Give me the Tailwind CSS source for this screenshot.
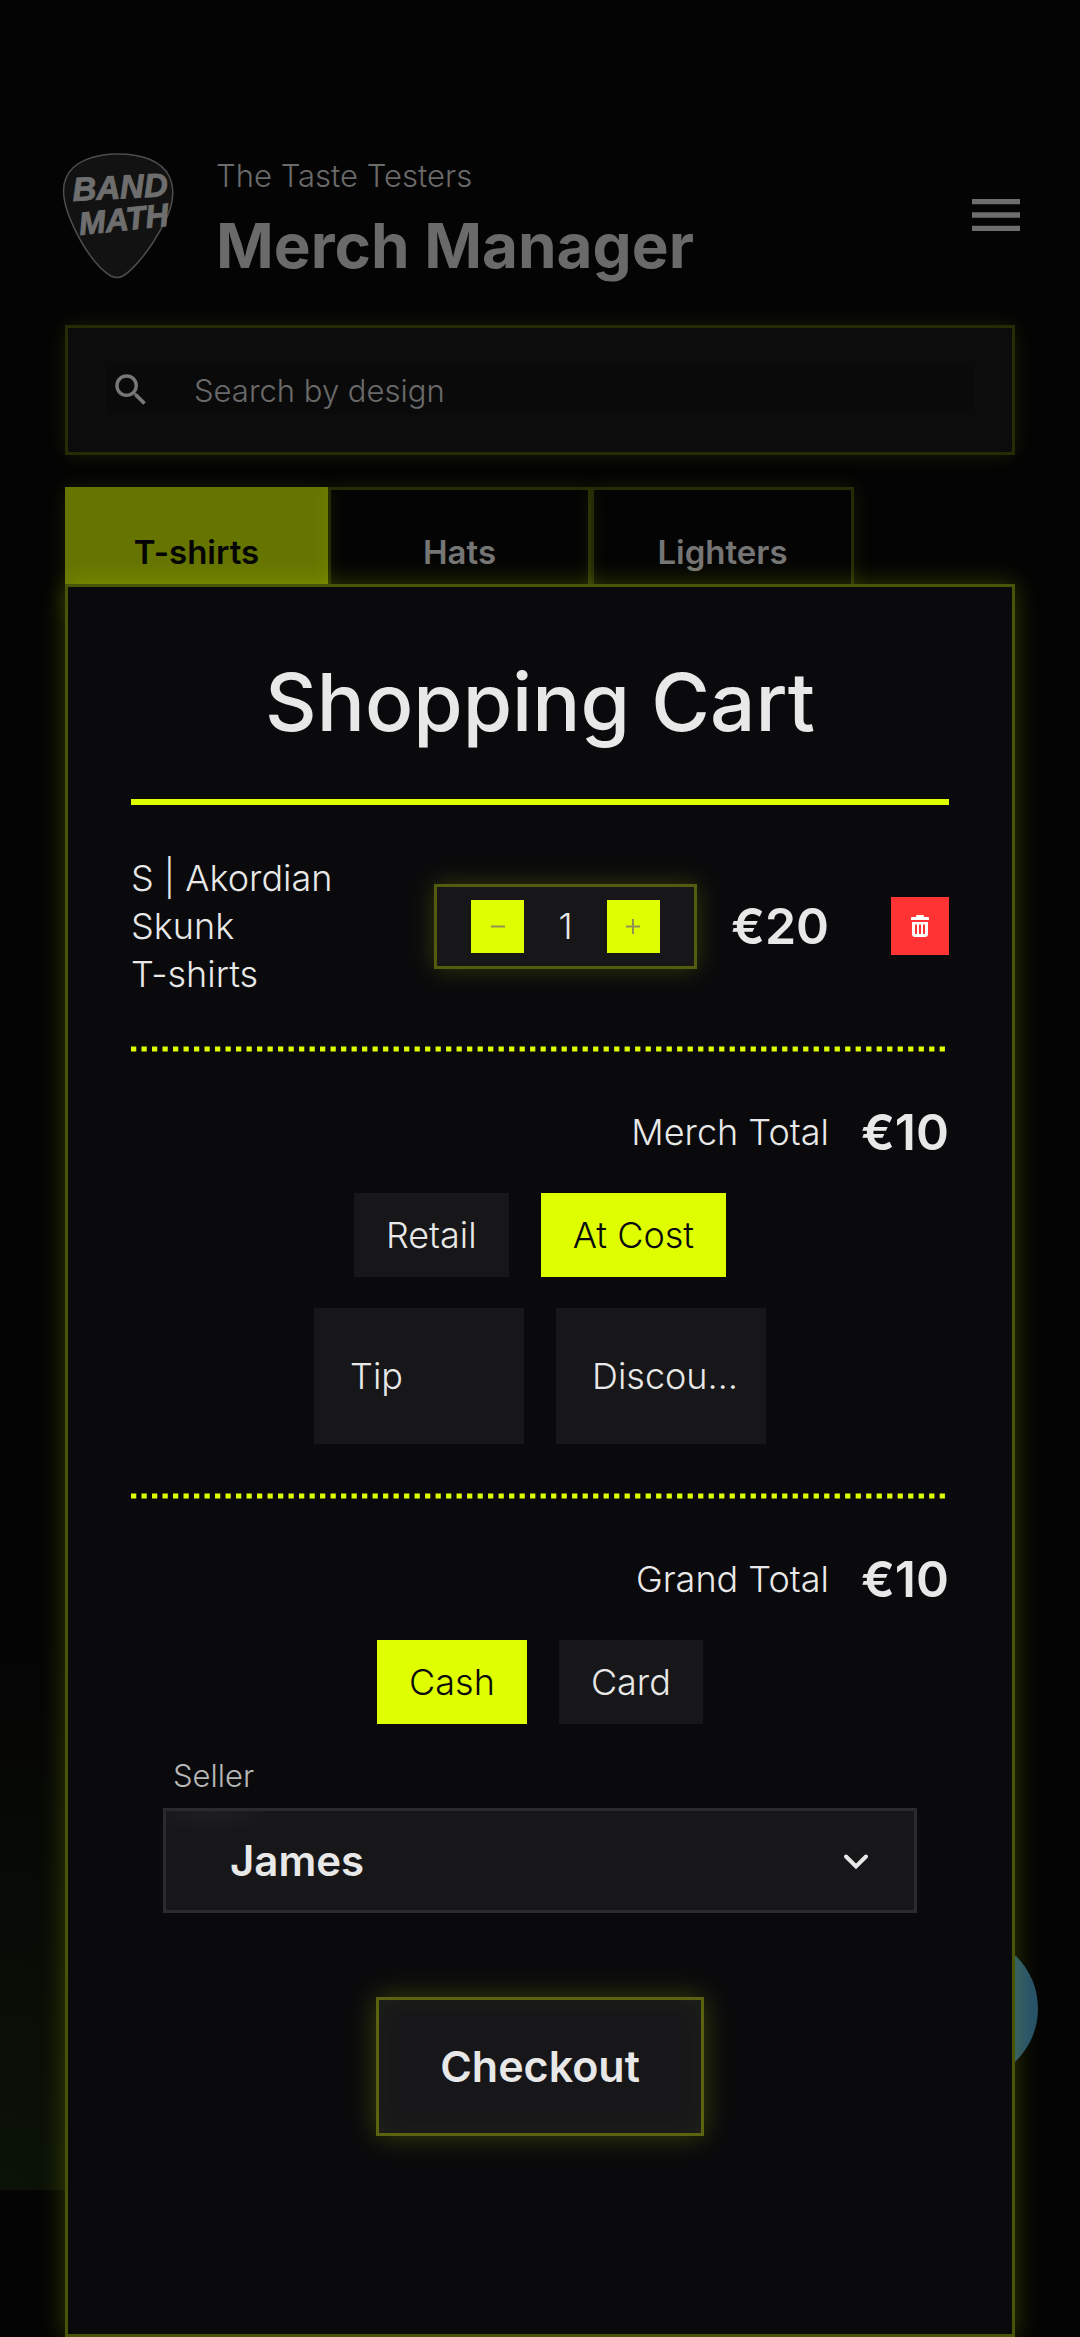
<!DOCTYPE html>
<html lang="en">
<head>
<meta charset="utf-8">
<meta name="viewport" content="width=device-width, initial-scale=1">
<title>Merch Manager</title>
<script src="https://cdn.jsdelivr.net/npm/@tailwindcss/browser@4"></script>
</head>
<body class="bg-[#040404] font-['Inter',sans-serif] font-light text-[#e8e8e8]">
<div class="grid min-h-screen grid-cols-1 grid-rows-1 overflow-hidden">

  <!-- Page behind the cart -->
  <div class="col-start-1 row-start-1 mb-[147px] bg-[radial-gradient(ellipse_700px_560px_at_0%_100%,#0b1207,#040404)] pt-[134px]">
    <header class="flex items-center pr-[52px] pl-[62px]">
      <svg class="h-[128px] w-[112px] shrink-0" viewBox="0 0 112 128" role="img" aria-label="Band Math">
        <path d="M56 3C82 3 100 11 107 25C117 46 106 68 90 93C80 108 68 121 61 125C57 127 53 127 49 125C40 120 29 107 20 92C8 71-4 45 4 27C11 10 33 3 56 3Z" fill="#121212" stroke="#4d4d4d" stroke-width="1.5"/>
        <g fill="#6e6e6e" stroke="#6e6e6e" stroke-width="1" font-family="Liberation Sans, sans-serif" font-weight="700" font-style="italic">
          <text x="11" y="50" font-size="33" transform="rotate(-3 11 50)">BAND</text>
          <text x="18" y="84" font-size="32" transform="rotate(-6 18 84)">MATH</text>
        </g>
      </svg>
      <div class="ml-[42px] flex-1 pt-[16px] pb-[6px] text-[#6a6a6a]">
        <p class="text-[31px] leading-[52px]">The Taste Testers</p>
        <h1 class="text-[62px] leading-[88px] font-bold">Merch Manager</h1>
      </div>
      <button type="button" aria-label="Menu" class="text-[#6e6e6e]">
        <svg class="size-[64px]" viewBox="0 0 24 24" fill="currentColor"><path d="M3 18h18v-2H3v2zm0-5h18v-2H3v2zm0-7v2h18V6H3z"/></svg>
      </button>
    </header>

    <main class="px-[65px]">
      <div class="mt-[29px] border-3 border-[#262b06] bg-[#0c0c0c] p-[38px] shadow-[0_0_20px_#dfff0018]">
        <label class="flex items-center bg-[#0a0a0a]">
          <svg class="mx-[4px] size-[42px] text-[#777]" viewBox="0 0 24 24" fill="currentColor" aria-hidden="true"><path d="M15.5 14h-.79l-.28-.27A6.47 6.47 0 0 0 16 9.5 6.5 6.5 0 1 0 9.500 16c1.610 0 3.090-.59 4.230-1.570l.27.28v.79l5 4.990L20.490 19l-4.990-5zm-6 0C7.010 14 5 11.990 5 9.500S7.010 5 9.500 5 14 7.010 14 9.500 11.990 14 9.500 14z"/></svg>
          <input type="search" aria-label="Search by design" placeholder="Search by design" class="ml-[38px] h-[48px] flex-1 bg-transparent text-[31px] outline-none placeholder:text-[#6a6a6a]">
        </label>
      </div>
      <nav class="mt-[32px] flex text-[33px] font-semibold text-[#757575]">
        <button type="button" class="h-[131px] w-[263px] bg-[#667500] text-[#040404] shadow-[0_0_20px_#dfff0018]">T-shirts</button>
        <button type="button" class="h-[131px] w-[263px] border-3 border-[#262b06] shadow-[0_0_20px_#dfff0018]">Hats</button>
        <button type="button" class="h-[131px] w-[263px] border-3 border-[#262b06] shadow-[0_0_20px_#dfff0018]">Lighters</button>
      </nav>
    </main>
  </div>

  <!-- Cart overlay -->
  <div class="relative col-start-1 row-start-1 flex flex-col px-[65px] pt-[584px]">
    <div class="absolute right-[42px] bottom-[255px] size-[147px] rounded-full bg-[#265169]"></div>
    <section role="dialog" aria-labelledby="cart-title" class="relative flex-1 border-3 border-[#4a5406] bg-[#0a0a0c] px-[63px] pt-[67px] pb-[160px] shadow-[0_0_24px_#dfff0038]">
      <h2 id="cart-title" class="text-center text-[80px] leading-[96px] font-medium">Shopping Cart</h2>
      <hr class="mt-[49px] border-0 border-t-6 border-[#dfff00]">

      <div class="mt-[49px] flex items-center text-[36px] leading-[48px]">
        <p class="w-[303px]">S | Akordian<br>Skunk<br>T-shirts</p>
        <div class="flex h-[85px] w-[263px] shrink-0 items-center justify-between border-3 border-[#525c0c] bg-[#171719] px-[34px] shadow-[0_0_24px_#dfff0030]">
          <button type="button" aria-label="Decrease quantity" class="grid size-[53px] place-items-center bg-[#dfff00] text-[#8f9455]">
            <svg class="size-[16px]" viewBox="0 0 16 16" stroke="currentColor" stroke-width="2" aria-hidden="true"><path d="M1 8.500h14"/></svg>
          </button>
          <span>1</span>
          <button type="button" aria-label="Increase quantity" class="grid size-[53px] place-items-center bg-[#dfff00] text-[#8f9455]">
            <svg class="size-[16px]" viewBox="0 0 16 16" stroke="currentColor" stroke-width="2" aria-hidden="true"><path d="M1 8.500h14M8 1v15"/></svg>
          </button>
        </div>
        <span class="ml-[34px] flex-1 text-[50px] font-semibold">€20</span>
        <button type="button" aria-label="Remove item" class="grid size-[58px] place-items-center bg-[#ff3333] text-white">
          <svg class="size-[28px]" viewBox="0 0 28 28" aria-hidden="true">
            <path fill="currentColor" d="M11 3h6q1 0 1 2h4q1 0 1 1v2H5V6q0-1 1-1h4q0-2 1-2zM6 10h16v12q0 3-3 3H9q-3 0-3-3z"/>
            <path stroke="#ff3333" stroke-width="2" d="M10 12.500v9.500M14 12.500v9.500M18 12.500v9.500"/>
          </svg>
        </button>
      </div>

      <svg class="mt-[48px] block h-[6px] w-full" aria-hidden="true"><line x1="0" y1="3" x2="99.5%" y2="3" pathLength="155" stroke="#dfff00" stroke-width="5" stroke-dasharray="1 1"/></svg>

      <div class="mt-[48px] flex h-[64px] items-center justify-end gap-[32px] text-[36px]">
        <span>Merch Total</span><span class="text-[50px] font-semibold">€10</span>
      </div>
      <div class="mt-[29px] flex justify-center gap-[32px] text-[36px]">
        <button type="button" class="h-[84px] bg-[#171719] px-[32px]">Retail</button>
        <button type="button" class="h-[84px] bg-[#dfff00] px-[32px] text-[#0a0a0c]">At Cost</button>
      </div>
      <div class="mt-[31px] flex justify-center gap-[32px] text-[36px]">
        <input type="text" aria-label="Tip" placeholder="Tip" class="h-[136px] w-[210px] bg-[#171719] pr-[27px] pl-[36px] text-ellipsis outline-none placeholder:text-[#e8e8e8]">
        <input type="text" aria-label="Discount" placeholder="Discount" class="h-[136px] w-[210px] bg-[#171719] pr-[27px] pl-[36px] text-ellipsis outline-none placeholder:text-[#e8e8e8]">
      </div>

      <svg class="mt-[49px] block h-[6px] w-full" aria-hidden="true"><line x1="0" y1="3" x2="99.5%" y2="3" pathLength="155" stroke="#dfff00" stroke-width="5" stroke-dasharray="1 1"/></svg>

      <div class="mt-[48px] flex h-[64px] items-center justify-end gap-[32px] text-[36px]">
        <span>Grand Total</span><span class="text-[50px] font-semibold">€10</span>
      </div>
      <div class="mt-[29px] flex justify-center gap-[32px] text-[36px]">
        <button type="button" class="h-[84px] bg-[#dfff00] px-[32px] text-[#0a0a0c]">Cash</button>
        <button type="button" class="h-[84px] bg-[#171719] px-[32px]">Card</button>
      </div>

      <div class="mt-[32px] px-[32px]">
        <label for="seller" class="block pl-[10px] text-[31px] leading-[40px] text-[#b8b8b8]">Seller</label>
        <div class="relative mt-[12px]">
          <select id="seller" class="block h-[105px] w-full appearance-none border-3 border-[#2b2b2d] bg-[#171719] bg-[radial-gradient(ellipse_60px_22px_at_46px_0,#1f1f21,transparent)] px-[64px] text-[42px] font-semibold outline-none"><option>James</option></select>
          <svg class="pointer-events-none absolute top-[38px] right-[46px] size-[30px]" viewBox="0 0 30 30" fill="none" stroke="#e8e8e8" stroke-width="4" stroke-linecap="round" aria-hidden="true"><path d="M5 10.500l10 10 10-10"/></svg>
        </div>
      </div>

      <div class="mt-[84px] flex justify-center">
        <button type="button" class="h-[139px] w-[328px] border-3 border-[#5a6410] bg-[#171719] text-[43px] font-semibold shadow-[0_0_26px_#dfff0038,inset_0_0_26px_#dfff000c]">Checkout</button>
      </div>
    </section>
  </div>
</div>
</body>
</html>
